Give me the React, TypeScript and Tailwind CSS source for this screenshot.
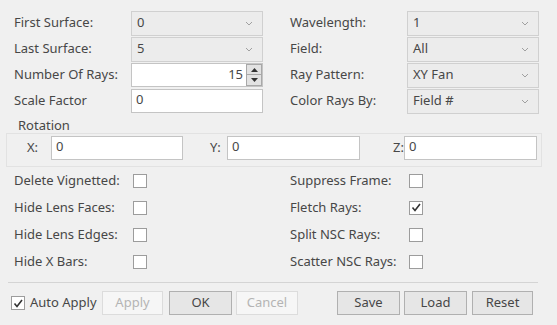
import React from 'react'

const font = { fontFamily: '"Noto Sans", "Open Sans", sans-serif' }

function Chevron() {
  return (
    <svg width="8" height="5" viewBox="0 0 8 5">
      <path d="M1 1l3 3 3-3" fill="none" stroke="#a0a0a0" strokeWidth="1" />
    </svg>
  )
}

function Combo({ value }: { value: string }) {
  return (
    <div className="flex h-[25px] w-[132px] items-center justify-between border border-[#d0d0d0] bg-[#ececec] pl-[5px] pr-[9px]">
      <span>{value}</span>
      <Chevron />
    </div>
  )
}

function TextBox({ value, w = 'w-[132px]' }: { value: string; w?: string }) {
  return (
    <div className={`flex h-[24px] ${w} items-start border border-[#c4c4c4] bg-white pl-[4px] leading-[18px]`}>
      {value}
    </div>
  )
}

function Spinner({ value }: { value: string }) {
  return (
    <div className="flex h-[24px] w-[132px] border border-[#c4c4c4] bg-white">
      <div className="flex flex-1 items-center justify-end pr-[3px]">{value}</div>
      <div className="flex w-[16px] flex-col">
        <div className="flex h-[11px] items-center justify-center border border-[#a8a8a8] bg-[#e2e2e2]">
          <svg width="7" height="4" viewBox="0 0 7 4"><path d="M0 4L3.5 0 7 4z" fill="#333" /></svg>
        </div>
        <div className="flex h-[11px] items-center justify-center border border-t-0 border-[#a8a8a8] bg-[#e2e2e2]">
          <svg width="7" height="4" viewBox="0 0 7 4"><path d="M0 0L3.5 4 7 0z" fill="#333" /></svg>
        </div>
      </div>
    </div>
  )
}

function Check({ checked = false }: { checked?: boolean }) {
  return (
    <div className="flex h-[14px] w-[14px] items-center justify-center border border-[#9c9c9c] bg-white">
      {checked && (
        <svg width="10" height="9" viewBox="0 0 10 9">
          <path d="M1.5 4.5l2.5 3 5-6.5" fill="none" stroke="#333" strokeWidth="1.6" />
        </svg>
      )}
    </div>
  )
}

function Row({ label, children }: { label: string; children: React.ReactNode }) {
  return (
    <div className="flex h-[26px] items-center">
      <span className="w-[117px]">{label}</span>
      {children}
    </div>
  )
}

function CheckRow({ label, checked }: { label: string; checked?: boolean }) {
  return (
    <div className="flex h-[27px] items-center">
      <span className="w-[119px]">{label}</span>
      <Check checked={checked} />
    </div>
  )
}

function Btn({ label, w, disabled }: { label: string; w: string; disabled?: boolean }) {
  return (
    <div
      className={`flex h-[24px] ${w} items-center justify-center border ${
        disabled ? 'border-[#dcdcdc] bg-[#f6f6f6] text-[#b4b4b4]' : 'border-[#b0b0b0] bg-[#e6e6e6]'
      }`}
    >
      {label}
    </div>
  )
}

export default function App() {
  return (
    <div className="h-[325px] w-[557px] overflow-hidden bg-[#f0f0f0] text-[13px] text-[#474747]" style={font}>
      {/* Top settings */}
      <div className="flex pl-[14px] pt-[10px]">
        <div className="w-[276px]">
          <Row label="First Surface:"><Combo value="0" /></Row>
          <Row label="Last Surface:"><Combo value="5" /></Row>
          <Row label="Number Of Rays:"><Spinner value="15" /></Row>
          <Row label="Scale Factor"><TextBox value="0" /></Row>
        </div>
        <div>
          <Row label="Wavelength:"><Combo value="1" /></Row>
          <Row label="Field:"><Combo value="All" /></Row>
          <Row label="Ray Pattern:"><Combo value="XY Fan" /></Row>
          <Row label="Color Rays By:"><Combo value="Field #" /></Row>
        </div>
      </div>

      {/* Rotation */}
      <div className="mt-[4px] h-[15px] pl-[18px] leading-[15px]">Rotation</div>
      <div className="ml-[6px] h-[34px] w-[536px] border border-[#e2e2e2] pt-[2px]">
        <div className="flex items-center">
          <span className="ml-[20px] w-[24px]">X:</span>
          <TextBox value="0" w="w-[132px]" />
          <span className="ml-[27px] w-[17px]">Y:</span>
          <TextBox value="0" w="w-[133px]" />
          <span className="ml-[33px] w-[11px]">Z:</span>
          <TextBox value="0" w="w-[133px]" />
        </div>
      </div>

      {/* Checkboxes */}
      <div className="flex pl-[14px]">
        <div className="w-[276px]">
          <CheckRow label="Delete Vignetted:" />
          <CheckRow label="Hide Lens Faces:" />
          <CheckRow label="Hide Lens Edges:" />
          <CheckRow label="Hide X Bars:" />
        </div>
        <div>
          <CheckRow label="Suppress Frame:" />
          <CheckRow label="Fletch Rays:" checked />
          <CheckRow label="Split NSC Rays:" />
          <CheckRow label="Scatter NSC Rays:" />
        </div>
      </div>

      {/* Footer */}
      <div className="ml-[8px] mt-[7px] h-px w-[530px] bg-[#d4d4d4]" />
      <div className="mt-[8px] flex items-center pl-[11px]">
        <div className="flex w-[91px] items-center">
          <Check checked />
          <span className="ml-[5px]">Auto Apply</span>
        </div>
        <Btn label="Apply" w="w-[61px]" disabled />
        <div className="ml-[6px]"><Btn label="OK" w="w-[63px]" /></div>
        <div className="ml-[4px]"><Btn label="Cancel" w="w-[62px]" disabled /></div>
        <div className="ml-[39px]"><Btn label="Save" w="w-[63px]" /></div>
        <div className="ml-[4px]"><Btn label="Load" w="w-[63px]" /></div>
        <div className="ml-[5px]"><Btn label="Reset" w="w-[61px]" /></div>
      </div>
    </div>
  )
}
